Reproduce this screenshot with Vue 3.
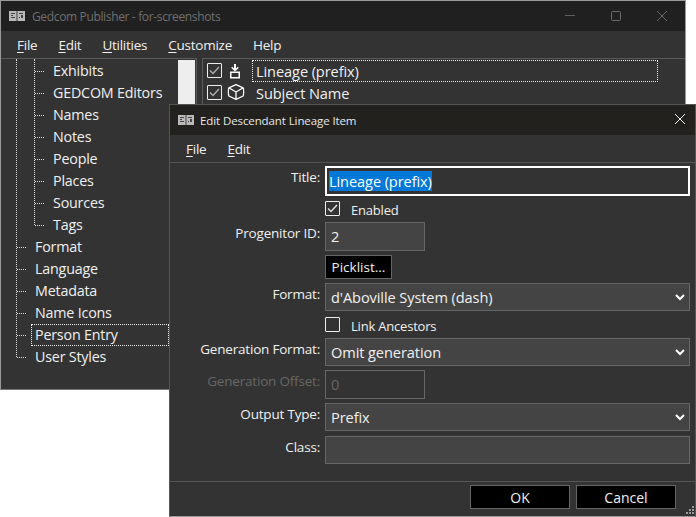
<script setup>
const treeChildren = ["Exhibits", "GEDCOM Editors", "Names", "Notes", "People", "Places", "Sources", "Tags"];
const treeTop = ["Format", "Language", "Metadata", "Name Icons", "Person Entry", "User Styles"];
const menus = [
  { key: "F", rest: "ile" },
  { key: "E", rest: "dit" },
  { key: "U", rest: "tilities" },
  { key: "C", rest: "ustomize" },
  { key: "", rest: "Help" },
];
</script>

<template>
  <div class="desktop">
    <div class="window main">
      <div class="titlebar">
        <svg class="book" width="16" height="12" viewBox="0 0 16 12">
          <path d="M0 1h16v10H0z" fill="#b9b9b9" />
          <path d="M7.500 1h1v10h-1zM2 3h4v1H2zM2 5h2v1H2zM2 7h4v1H2zM10 3h4v1h-4zM12 5h2v3h-2zM10 7h1v1h-1z" fill="#444" />
        </svg>
        <span class="title dim">Gedcom Publisher - for-screenshots</span>
        <div class="controls">
          <svg width="12" height="12" viewBox="0 0 12 12"><path d="M1 5.500h10" stroke="#5f5f5f" /></svg>
          <svg width="12" height="12" viewBox="0 0 12 12"><rect x="1.500" y="1.500" width="9" height="9" rx="1" fill="none" stroke="#6a6a6a" /></svg>
          <svg width="12" height="12" viewBox="0 0 12 12"><path d="M1 1l10 10M11 1L1 11" stroke="#6a6a6a" /></svg>
        </div>
      </div>
      <div class="menubar">
        <span v-for="m in menus" :key="m.rest" class="menu-item"><u>{{ m.key }}</u>{{ m.rest }}</span>
      </div>
      <div class="panes">
        <div class="tree">
          <div class="tree-list">
            <div class="line-outer"></div>
            <div class="line-inner"></div>
            <div v-for="name in treeChildren" :key="name" class="tree-row child">
              <span class="stub"></span><span class="tree-label">{{ name }}</span>
            </div>
            <div v-for="name in treeTop" :key="name" class="tree-row">
              <span class="stub"></span>
              <span class="tree-label" :class="{ focused: name === 'Person Entry' }">{{ name }}</span>
            </div>
          </div>
          <div class="scrollbar"></div>
        </div>
        <div class="list">
          <div class="list-row">
            <span class="check"><svg width="11" height="9" viewBox="0 0 11 9"><path d="M1 4.500l3 3 6-6.500" fill="none" stroke="#aaa" stroke-width="1.500" /></svg></span>
            <svg class="row-icon" width="16" height="16" viewBox="0 0 16 16" fill="none" stroke="#fff">
              <path d="M7 1v5.500" stroke-width="2" />
              <path d="M3.700 4.200L7 7.500l3.300-3.300" stroke-width="1.500" />
              <rect x="2.750" y="9.250" width="8.500" height="5.500" stroke-width="1.500" />
            </svg>
            <span class="list-label focused-row">Lineage (prefix)</span>
          </div>
          <div class="list-row">
            <span class="check"><svg width="11" height="9" viewBox="0 0 11 9"><path d="M1 4.500l3 3 6-6.500" fill="none" stroke="#aaa" stroke-width="1.500" /></svg></span>
            <svg class="row-icon cube" width="18" height="16" viewBox="0 0 18 16" fill="none" stroke="#fff" stroke-width="1.300" stroke-linejoin="round">
              <path d="M9 .7l7.200 3.100c.6 1.500.6 6.500 0 8.200L9 15.300 1.800 12c-.6-1.700-.6-6.700 0-8.200z" />
              <path d="M1.800 3.800L9 8l7.200-4.200M9 8v7.300" />
            </svg>
            <span class="list-label">Subject Name</span>
          </div>
        </div>
      </div>
    </div>

    <div class="window dialog">
      <div class="titlebar dialog-title">
        <svg class="book" width="16" height="12" viewBox="0 0 16 12">
          <path d="M0 1h16v10H0z" fill="#b9b9b9" />
          <path d="M7.500 1h1v10h-1zM2 3h4v1H2zM2 5h2v1H2zM2 7h4v1H2zM10 3h4v1h-4zM12 5h2v3h-2zM10 7h1v1h-1z" fill="#444" />
        </svg>
        <span class="title small">Edit Descendant Lineage Item</span>
        <svg class="dialog-close" width="12" height="12" viewBox="0 0 12 12"><path d="M1 1l10 10M11 1L1 11" stroke="#eee" /></svg>
      </div>
      <div class="menubar dialog-menu">
        <span class="menu-item"><u>F</u>ile</span>
        <span class="menu-item"><u>E</u>dit</span>
      </div>
      <div class="form">
        <div class="field h30">
          <label>Title:</label>
          <div class="box active"><span class="selected">Lineage (prefix)</span></div>
        </div>
        <div class="field check-row">
          <label></label>
          <span class="check small-check"><svg width="11" height="9" viewBox="0 0 11 9"><path d="M1 4.500l3 3 6-6.500" fill="none" stroke="#ddd" stroke-width="1.500" /></svg></span>
          <span class="check-text">Enabled</span>
        </div>
        <div class="field h29 gap5">
          <label>Progenitor ID:</label>
          <div class="box short">2</div>
        </div>
        <div class="field h24 gap4">
          <label></label>
          <button class="btn picklist">Picklist...</button>
        </div>
        <div class="field h28 gap4">
          <label>Format:</label>
          <div class="box select">d'Aboville System (dash)
            <svg class="chev" width="10" height="7" viewBox="0 0 10 7"><path d="M1 1l4 4 4-4" fill="none" stroke="#fff" stroke-width="2" /></svg>
          </div>
        </div>
        <div class="field check-row lower">
          <label></label>
          <span class="check small-check"></span>
          <span class="check-text">Link Ancestors</span>
        </div>
        <div class="field h28 gap5">
          <label>Generation Format:</label>
          <div class="box select">Omit generation
            <svg class="chev" width="10" height="7" viewBox="0 0 10 7"><path d="M1 1l4 4 4-4" fill="none" stroke="#fff" stroke-width="2" /></svg>
          </div>
        </div>
        <div class="field h29 gap4 disabled">
          <label>Generation Offset:</label>
          <div class="box short off">0</div>
        </div>
        <div class="field h28 gap4">
          <label>Output Type:</label>
          <div class="box select">Prefix
            <svg class="chev" width="10" height="7" viewBox="0 0 10 7"><path d="M1 1l4 4 4-4" fill="none" stroke="#fff" stroke-width="2" /></svg>
          </div>
        </div>
        <div class="field h28 gap5">
          <label>Class:</label>
          <div class="box"></div>
        </div>
      </div>
      <div class="footer">
        <button class="btn wide">OK</button>
        <button class="btn wide">Cancel</button>
        <svg class="grip" width="9" height="9" viewBox="0 0 9 9" fill="#999">
          <path d="M7 0h2v2H7zM4 3h2v2H4zM7 3h2v2H7zM1 6h2v2H1zM4 6h2v2H4zM7 6h2v2H7z" />
        </svg>
      </div>
    </div>
  </div>
</template>

<style>
html, body { background: #fff; overflow: hidden; }
</style>

<style scoped>
.desktop {
  position: relative;
  width: 696px;
  height: 517px;
  overflow: hidden;
  background: #fff;
  font-family: "Open Sans", sans-serif;
  font-size: 14px;
  color: #f0f0f0;
}
.window {
  position: absolute;
  box-sizing: border-box;
  background: #333;
  display: flex;
  flex-direction: column;
}
.main {
  left: 0;
  top: 0;
  width: 686px;
  height: 390px;
  border: 1px solid #9a9a9a;
  border-bottom-color: #777;
}
.dialog {
  left: 169px;
  top: 104px;
  width: 527px;
  height: 413px;
  border: 1px solid #555;
  border-bottom-color: #999;
}
.titlebar {
  height: 30px;
  flex: none;
  background: #202020;
  display: flex;
  align-items: center;
  padding-left: 8px;
}
.dialog-title {
  background: #22211d;
  position: relative;
}
.book { flex: none; }
.title { margin-left: 7px; font-size: 12px; letter-spacing: -0.35px; }
.title.small { font-size: 11.500px; letter-spacing: -0.1px; margin-left: 6px; color: #e8e8e8; }
.dim { color: #6f6f6f; }
.controls {
  margin-left: auto;
  display: flex;
  gap: 34px;
  padding-right: 17px;
}
.dialog-close { position: absolute; right: 9px; top: 8px; }
.menubar {
  height: 27px;
  flex: none;
  display: flex;
  align-items: center;
  padding-left: 16px;
  gap: 21px;
  font-size: 13.500px;
  letter-spacing: -0.25px;
}
.menubar u { text-underline-offset: 2px; }
.panes {
  flex: 1;
  display: flex;
  gap: 5px;
  min-height: 0;
}
.tree {
  width: 196px;
  flex: none;
  box-sizing: border-box;
  border-top: 1px solid #5a5a5a;
  border-right: 1px solid #5a5a5a;
  display: flex;
  position: relative;
  overflow: hidden;
}
.tree-list {
  position: relative;
  width: 168px;
  padding-top: 1px;
  flex: none;
}
.line-outer {
  position: absolute;
  left: 15px;
  top: 0;
  height: 298px;
  border-left: 1px dotted #ddd;
}
.line-inner {
  position: absolute;
  left: 33px;
  top: 0;
  height: 166px;
  border-left: 1px dotted #ddd;
}
.tree-row {
  height: 22px;
  display: flex;
  align-items: center;
  letter-spacing: -0.2px;
  padding-left: 16px;
  font-size: 14.300px;
}
.tree-row.child { padding-left: 34px; }
.stub {
  width: 9px;
  flex: none;
  border-top: 1px dotted #ddd;
}
.tree-label {
  margin-left: 5px;
  padding: 0 0 0 3px;
  height: 22px;
  line-height: 20px;
  box-sizing: border-box;
  border: 1px solid transparent;
  flex: 1;
  white-space: nowrap;
}
.tree-label.focused { border: 1px dotted #eee; }
.scrollbar {
  width: 17px;
  margin-left: 9px;
  margin-top: 1px;
  background: #eee;
  height: 44px;
  flex: none;
}
.list {
  flex: 1;
  border-top: 1px solid #5a5a5a;
  border-left: 1px solid #5a5a5a;
  padding-top: 1px;
}
.list-row {
  height: 22px;
  display: flex;
  align-items: center;
  padding-left: 4px;
  font-size: 14.600px;
  letter-spacing: -0.1px;
}
.check {
  box-sizing: border-box;
  width: 15px;
  height: 15px;
  border: 1px solid #eee;
  border-radius: 1px;
  display: flex;
  align-items: center;
  justify-content: center;
  flex: none;
}
.list-row .check { margin-top: -2px; }
.row-icon { margin-left: 6px; flex: none; margin-top: -1px; }
.row-icon.cube { margin-left: 5px; margin-right: -1px; margin-top: -2px; }
.list-label {
  height: 22px;
  line-height: 20px;
  padding-left: 3px;
  box-sizing: border-box;
  border: 1px solid transparent;
  margin-left: 8px;
}
.focused-row { border: 1px dotted #eee; width: 406px; }
.form {
  flex: 1;
  border-top: 1px solid #555;
  border-bottom: 1px solid #555;
  padding-top: 3px;
  display: flex;
  flex-direction: column;
  font-size: 13.500px;
  letter-spacing: -0.2px;
}
.field {
  display: flex;
  align-items: flex-start;
  padding-right: 5px;
}
.field label {
  width: 150px;
  flex: none;
  text-align: right;
  white-space: nowrap;
  line-height: 20px;
  margin-top: 1px;
  font-size: 13.500px;
}
.h30 { height: 30px; }
.h29 { height: 29px; }
.h28 { height: 28px; }
.h24 { height: 24px; }
.gap4 { margin-top: 4px; }
.gap5 { margin-top: 5px; }
.box {
  margin-left: 5px;
  flex: 1;
  height: 100%;
  box-sizing: border-box;
  background: #444;
  border: 1px solid #666;
  padding-left: 5px;
  font-size: 14.600px;
  line-height: 27px;
  position: relative;
  letter-spacing: -0.1px;
}
.box.active {
  border: 2px solid #fff;
  background: #333;
  padding-left: 2px;
  line-height: 27px;
}
.selected {
  display: inline-block;
  background: #0078d7;
  color: #fff;
  height: 20px;
  line-height: 20px;
}
.box.short { flex: none; width: 100px; }
.box.off { background: #333; color: #666; }
.disabled label { color: #666; }
.chev { position: absolute; right: 4px; top: 10px; }
.check-row {
  height: 15px;
  margin-top: 6px;
  align-items: center;
}
.check-row.lower { margin-top: 7px; }
.small-check { margin-left: 5px; margin-top: -2px; }
.check-text { margin-left: 11px; font-size: 13px; }
.btn {
  font: inherit;
  color: #f0f0f0;
  background: #000;
  border: 1px solid #666;
  padding: 0;
}
.picklist {
  margin-left: 5px;
  width: 67px;
  height: 24px;
  font-size: 13.500px;
}
.footer {
  height: 31px;
  flex: none;
  position: relative;
  display: flex;
  justify-content: flex-end;
  align-items: flex-start;
  padding: 3px 19px 0 0;
  gap: 6px;
}
.wide {
  width: 100px;
  height: 24px;
  font-size: 14px;
}
.grip { position: absolute; right: 1px; bottom: 1px; }
</style>
